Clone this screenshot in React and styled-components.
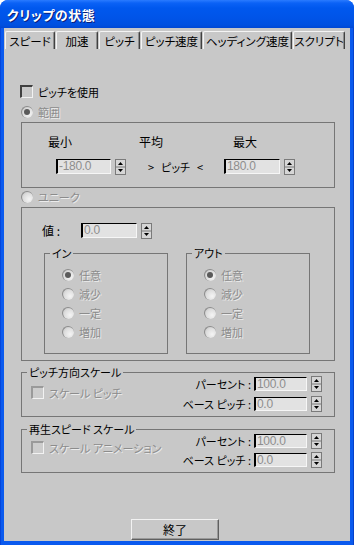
import styled, { createGlobalStyle } from "styled-components";

const GlobalStyle = createGlobalStyle`
  html, body {
    margin: 0;
    padding: 0;
    background: #ffffff;
  }
  body {
    font-family: "Noto Sans CJK JP", "Liberation Sans", sans-serif;
    font-size: 11px;
    font-feature-settings: "palt";
  }
`;

const tabs = [
  { label: "スピード", w: 50 },
  { label: "加速", w: 42 },
  { label: "ピッチ", w: 41 },
  { label: "ピッチ速度", w: 61 },
  { label: "ヘッディング速度", w: 89 },
  { label: "スクリプト", w: 52 },
];

const curves = ["任意", "減少", "一定", "増加"];

function Spinner() {
  return (
    <SpinBox>
      <svg width="11" height="16" viewBox="0 0 11 16">
        <rect x="0.5" y="0.5" width="10" height="15" fill="#d6d6d6" stroke="#7a7a7a" />
        <line x1="1" y1="8" x2="10" y2="8" stroke="#7a7a7a" />
        <polygon points="3,6 8,6 5.5,3" fill="#000" />
        <polygon points="3,10 8,10 5.5,13" fill="#000" />
      </svg>
    </SpinBox>
  );
}

function Radio({ checked, children }) {
  return (
    <RadioRow>
      <RadioDot $checked={checked} />
      <Dim>{children}</Dim>
    </RadioRow>
  );
}

function SpinField({ label, value, w, h }) {
  return (
    <FormRow>
      {label && <FormLabel>{label}</FormLabel>}
      <Field $w={w} $h={h}>{value}</Field>
      <Spinner />
    </FormRow>
  );
}

export default function App() {
  return (
    <>
      <GlobalStyle />
      <Window>
        <TitleBar>クリップの状態</TitleBar>
        <Body>
          <TabBar>
            {tabs.map((t) => (
              <Tab key={t.label} $w={t.w}>
                {t.label}
              </Tab>
            ))}
          </TabBar>

          <Content>
            <CheckRow $top={36}>
              <CheckBox />
              <span>ピッチを使用</span>
            </CheckRow>

            <OptionRow $top={7}>
              <Radio checked>範囲</Radio>
            </OptionRow>

            <Group $top={4} $h={66}>
              <LabelRow>
                <ColLabel $w={91}>最小</ColLabel>
                <ColLabel $w={94}>平均</ColLabel>
                <ColLabel>最大</ColLabel>
              </LabelRow>
              <RangeRow>
                <Field $w={55} $h={15}>-180.0</Field>
                <Spinner />
                <Between>
                  <span>&gt;</span>
                  <span>ピッチ</span>
                  <span>&lt;</span>
                </Between>
                <Field $w={56} $h={15}>180.0</Field>
                <Spinner />
              </RangeRow>
            </Group>

            <OptionRow $top={2}>
              <Radio>ユニーク</Radio>
            </OptionRow>

            <Group $top={4} $h={154}>
              <ValueRow>
                <ValueLabel>値 :</ValueLabel>
                <Field $w={56} $h={15}>0.0</Field>
                <Spinner />
              </ValueRow>
              <SubGroups>
                {["イン", "アウト"].map((name) => (
                  <SubGroup key={name}>
                    <Legend>{name}</Legend>
                    <RadioList>
                      {curves.map((c, i) => (
                        <Radio key={c} checked={i === 0}>
                          {c}
                        </Radio>
                      ))}
                    </RadioList>
                  </SubGroup>
                ))}
              </SubGroups>
            </Group>

            <Group $top={11} $h={45}>
              <Legend>ピッチ方向スケール</Legend>
              <ScaleBody>
                <CheckRow $top={9}>
                  <CheckBox $disabled />
                  <Dim>スケール ピッチ</Dim>
                </CheckRow>
                <FormCol $gap={6}>
                  <SpinField label="パーセント :" value="100.0" w={53} h={14} />
                  <SpinField label="ベース ピッチ :" value="0.0" w={53} h={14} />
                </FormCol>
              </ScaleBody>
            </Group>

            <Group $top={12} $h={44}>
              <Legend>再生スピード スケール</Legend>
              <ScaleBody>
                <CheckRow $top={7}>
                  <CheckBox $disabled />
                  <Dim>スケール アニメーション</Dim>
                </CheckRow>
                <FormCol $gap={5}>
                  <SpinField label="パーセント :" value="100.0" w={53} h={14} />
                  <SpinField label="ベース ピッチ :" value="0.0" w={53} h={14} />
                </FormCol>
              </ScaleBody>
            </Group>
          </Content>

          <Footer>
            <Button>終了</Button>
          </Footer>
        </Body>
      </Window>
    </>
  );
}

const Window = styled.div`
  width: 354px;
  height: 545px;
  display: flex;
  flex-direction: column;
  background: linear-gradient(90deg, #0031c8 0, #0a5aee 1px, #0a5aee 353px, #0028a8 354px);
  border-radius: 8px 8px 0 0;
  box-sizing: border-box;
`;

const TitleBar = styled.div`
  height: 28px;
  flex: none;
  display: flex;
  align-items: center;
  padding-left: 7px;
  color: #ffffff;
  font-size: 13px;
  font-weight: bold;
  letter-spacing: 0.5px;
  text-shadow: 1px 1px 0 #0a1e78;
  border-radius: 8px 8px 0 0;
  background: linear-gradient(
    180deg,
    #2a7bff 0,
    #0b62f6 3px,
    #0058ee 8px,
    #0054e8 18px,
    #0050e0 25px,
    #0048d4 28px
  );
`;

const Body = styled.div`
  flex: 1;
  margin: 0 4px 4px;
  background: #c8c8c8;
  display: flex;
  flex-direction: column;
  color: #000;
`;

const TabBar = styled.div`
  display: flex;
  margin: 3px 0 0 1px;
  height: 18px;
`;

const Tab = styled.div`
  box-sizing: border-box;
  width: ${(p) => p.$w}px;
  height: 18px;
  margin-right: 1px;
  display: flex;
  align-items: center;
  justify-content: center;
  border-top: 1px solid #f4f4f4;
  border-left: 1px solid #f4f4f4;
  border-right: 1px solid #404040;
  box-shadow: inset -1px 0 0 #8c8c8c;
  border-radius: 2px 2px 0 0;
  font-size: 11.5px;
  white-space: nowrap;
`;

const Content = styled.div`
  display: flex;
  flex-direction: column;
  padding-left: 16px;
  padding-right: 15px;
`;

const CheckRow = styled.div`
  display: flex;
  align-items: center;
  gap: 5px;
  height: 13px;
  margin-top: ${(p) => p.$top || 0}px;
  white-space: nowrap;
`;

const CheckBox = styled.span`
  box-sizing: border-box;
  width: 13px;
  height: 13px;
  flex: none;
  border-top: 2px solid ${(p) => (p.$disabled ? "#9a9a9a" : "#404040")};
  border-left: 2px solid ${(p) => (p.$disabled ? "#9a9a9a" : "#404040")};
  border-right: 1px solid #f2f2f2;
  border-bottom: 1px solid #f2f2f2;
  background: ${(p) => (p.$disabled ? "#cdcdcd" : "#c8c8c8")};
`;

const OptionRow = styled.div`
  margin-top: ${(p) => p.$top}px;
  padding-left: 1px;
`;

const RadioRow = styled.div`
  display: flex;
  align-items: center;
  gap: 5px;
  height: 13px;
  white-space: nowrap;
`;

const RadioDot = styled.span`
  position: relative;
  width: 12px;
  height: 12px;
  flex: none;
  border-radius: 50%;
  box-sizing: border-box;
  background: radial-gradient(circle at 65% 65%, #f4f4f4 0, #dcdcdc 60%, #b4b4b4 100%);
  border-top: 1px solid #8c8c8c;
  border-left: 1px solid #8c8c8c;
  &::after {
    content: "";
    display: ${(p) => (p.$checked ? "block" : "none")};
    position: absolute;
    left: 2px;
    top: 2px;
    width: 6px;
    height: 6px;
    border-radius: 50%;
    background: #5a5a5a;
  }
`;

const Dim = styled.span`
  color: #8c8c8c;
  text-shadow: 1px 1px 0 #ececec;
`;

const Group = styled.div`
  position: relative;
  box-sizing: border-box;
  margin-top: ${(p) => p.$top}px;
  margin-left: 1px;
  height: ${(p) => p.$h}px;
  border: 1px solid #767676;
`;

const Legend = styled.span`
  position: absolute;
  top: -8px;
  left: 5px;
  padding: 0 2px 0 2px;
  line-height: 14px;
  background: #c8c8c8;
  white-space: nowrap;
`;

const LabelRow = styled.div`
  display: flex;
  margin-top: 11px;
  padding-left: 26px;
  height: 14px;
  align-items: center;
`;

const ColLabel = styled.span`
  width: ${(p) => (p.$w ? `${p.$w}px` : "auto")};
  flex: none;
  font-size: 12px;
`;

const RangeRow = styled.div`
  display: flex;
  align-items: flex-start;
  margin-top: 11px;
  padding-left: 34px;
`;

const Field = styled.div`
  box-sizing: border-box;
  width: ${(p) => p.$w}px;
  height: ${(p) => p.$h}px;
  flex: none;
  background: #e2e2e2;
  border-top: 1px solid #000;
  border-left: 2px solid #000;
  border-right: 1px solid #f6f6f6;
  border-bottom: 1px solid #f6f6f6;
  color: #8e8e8e;
  font-family: "Liberation Sans", "Arial", sans-serif;
  font-size: 12px;
  letter-spacing: -0.3px;
  line-height: ${(p) => p.$h - 2}px;
  padding-left: 1px;
`;

const SpinBox = styled.span`
  display: block;
  flex: none;
  margin-left: 4px;
  height: 16px;
  line-height: 0;
`;

const Between = styled.span`
  display: flex;
  gap: 7px;
  width: 76px;
  flex: none;
  margin-left: 22px;
  line-height: 15px;
  padding-top: 1px;
`;

const ValueRow = styled.div`
  display: flex;
  align-items: center;
  margin-top: 14px;
  padding-left: 20px;
`;

const ValueLabel = styled.span`
  width: 39px;
  flex: none;
  font-size: 12px;
`;

const SubGroups = styled.div`
  display: flex;
  gap: 18px;
  margin-top: 14px;
  padding-left: 22px;
`;

const SubGroup = styled.div`
  position: relative;
  box-sizing: border-box;
  width: 124px;
  height: 101px;
  border: 1px solid #767676;
`;

const RadioList = styled.div`
  display: flex;
  flex-direction: column;
  gap: 6px;
  padding: 14px 0 0 17px;
`;

const ScaleBody = styled.div`
  display: flex;
  justify-content: space-between;
  padding: 4px 12px 0 9px;
`;

const FormCol = styled.div`
  display: flex;
  flex-direction: column;
  gap: ${(p) => p.$gap}px;
`;

const FormRow = styled.div`
  display: flex;
  align-items: center;
  justify-content: flex-end;
  height: 14px;
`;

const FormLabel = styled.span`
  margin-right: 3px;
  white-space: nowrap;
`;

const Footer = styled.div`
  margin-top: auto;
  padding: 0 0 1px 127px;
`;

const Button = styled.button`
  box-sizing: border-box;
  width: 88px;
  height: 21px;
  background: #c8c8c8;
  border-top: 1px solid #f2f2f2;
  border-left: 1px solid #f2f2f2;
  border-right: 1px solid #606060;
  border-bottom: 1px solid #606060;
  box-shadow: inset -1px -1px 0 #9a9a9a;
  font-family: "Noto Sans CJK JP", sans-serif;
  font-size: 12px;
  color: #000;
  padding: 0;
`;
